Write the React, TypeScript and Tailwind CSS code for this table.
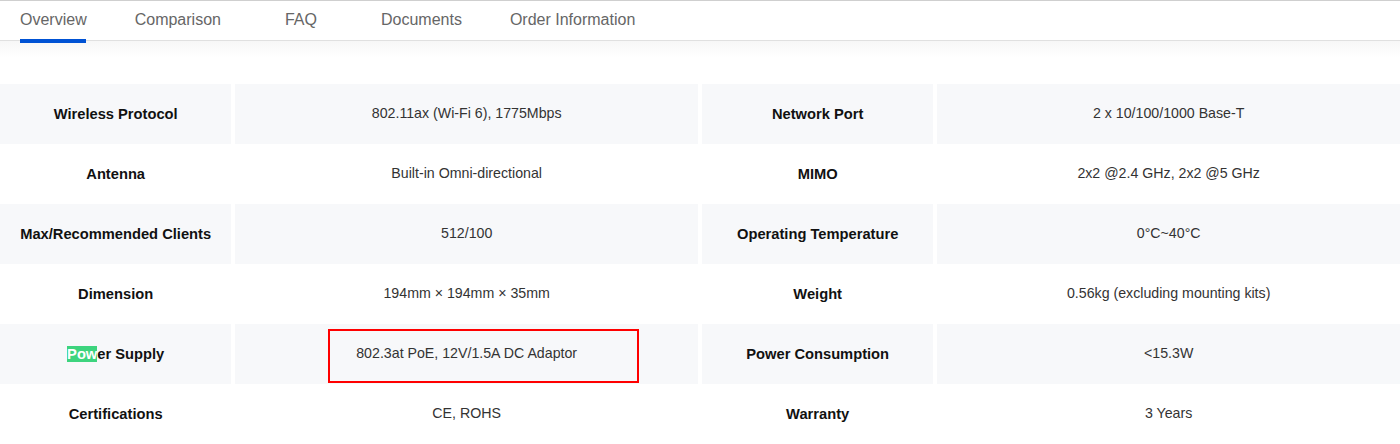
import React from "react";

const rows: [React.ReactNode, string, string, string][] = [
  ["Wireless Protocol", "802.11ax (Wi-Fi 6), 1775Mbps", "Network Port", "2 x 10/100/1000 Base-T"],
  ["Antenna", "Built-in Omni-directional", "MIMO", "2x2 @2.4 GHz, 2x2 @5 GHz"],
  ["Max/Recommended Clients", "512/100", "Operating Temperature", "0°C~40°C"],
  ["Dimension", "194mm × 194mm × 35mm", "Weight", "0.56kg (excluding mounting kits)"],
  [
    <>
      <span className="bg-[#3dd47e] text-white">Pow</span>er Supply
    </>,
    "802.3at PoE, 12V/1.5A DC Adaptor",
    "Power Consumption",
    "<15.3W",
  ],
  ["Certifications", "CE, ROHS", "Warranty", "3 Years"],
];

export default function App() {
  return (
    <div className="relative w-[1400px] h-[444px] overflow-hidden bg-white" style={{ fontFamily: '"Liberation Sans", Arial, sans-serif' }}>
      <div className="h-[41px] border-t border-[#cfcfcf] border-b border-b-[#e0e0e0] flex items-stretch text-[16px] text-[#666] pb-[2px]">
        <div className="ml-[20px] relative flex items-center">
          Overview
          <div className="absolute left-0 right-[1px] bottom-[-5px] h-[4px] bg-[#0052d4]" />
        </div>
        <div className="ml-[48px] flex items-center">Comparison</div>
        <div className="ml-[64px] flex items-center">FAQ</div>
        <div className="ml-[64px] flex items-center">Documents</div>
        <div className="ml-[48px] flex items-center">Order Information</div>
      </div>
      <div className="h-[16px] bg-gradient-to-b from-[#f7f7f7] to-white" />
      <div className="h-[27px]" />
      <div>
        {rows.map((r, i) => (
          <div key={i} className="grid grid-cols-[1fr_2fr_1fr_2fr] gap-x-[4px] h-[60px]">
            {r.map((c, j) => (
              <div
                key={j}
                className={`flex items-center justify-center ${i % 2 === 0 ? "bg-[#f7f8fa]" : "bg-white"} ${j % 2 === 0 ? "font-bold text-[14.7px] text-[#111]" : "text-[14.2px] text-[#333]"}`}
              >
                <span>{c}</span>
              </div>
            ))}
          </div>
        ))}
      </div>
      <div className="absolute left-[328px] top-[329px] w-[311px] h-[54px] border-2 border-[#ff0000]" />
    </div>
  );
}
